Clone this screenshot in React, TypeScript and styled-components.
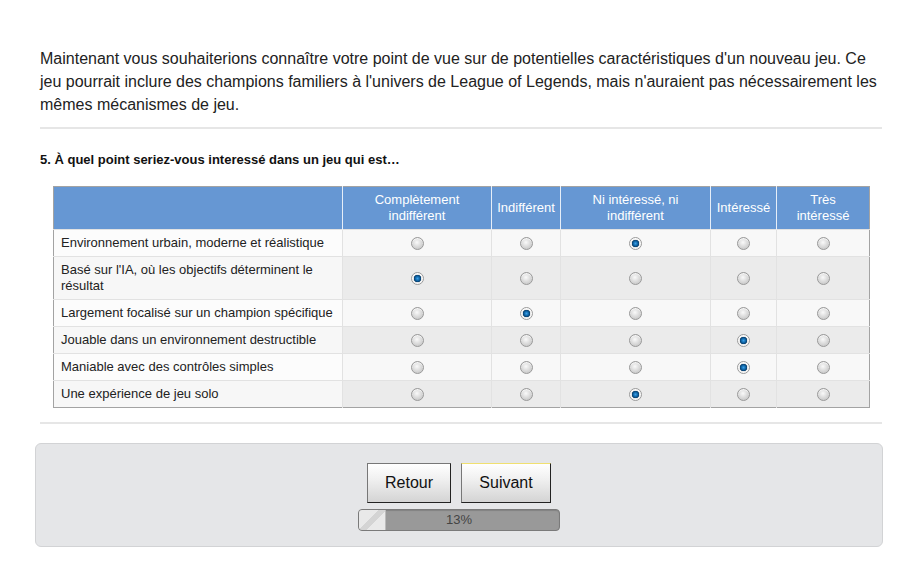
import React from 'react';
import styled, { createGlobalStyle } from 'styled-components';

const GlobalStyle = createGlobalStyle`
	html, body {
		margin: 0;
		padding: 0;
		background: #ffffff;
		font-family: 'Liberation Sans', Arial, sans-serif;
		color: #222;
	}
`;

const Page = styled.div`
	width: 842px;
	padding: 47px 0 0 40px;
`;

const Intro = styled.p`
	margin: 0;
	font-size: 16px;
	line-height: 23px;
	color: #222;
`;

const Divider = styled.hr<{ $gap: number }>`
	border: 0;
	height: 2px;
	background: #e6e6e6;
	margin: ${(p) => p.$gap}px 0 0;
`;

const Question = styled.h2`
	margin: 23px 0 0;
	font-size: 13px;
	line-height: 16px;
	font-weight: bold;
	color: #111;
`;

const Grid = styled.table`
	margin: 18px 0 0 13px;
	width: 816px;
	border-collapse: collapse;
	table-layout: fixed;
	border: 1px solid #a3a3a3;
	font-size: 13px;
	line-height: 16px;
`;

const HeadCell = styled.th`
	background: #6697d3;
	color: #fff;
	font-weight: normal;
	padding: 5px 2px;
	text-align: center;
	white-space: nowrap;
	border-left: 1px solid #e6eef8;
	&:first-child {
		border-left: 0;
	}
`;

const Row = styled.tr<{ $alt: boolean }>`
	background: ${(p) => (p.$alt ? '#ebebeb' : '#f8f8f8')};
`;

const LabelCell = styled.td`
	padding: 5px 8px 5px 7px;
	text-align: left;
	color: #222;
	border-top: 1px solid #e2e2e2;
	background: rgba(255, 255, 255, 0.6);
`;

const ChoiceCell = styled.td`
	padding: 5px 0;
	text-align: center;
	border-top: 1px solid #e2e2e2;
	border-left: 1px solid #e2e2e2;
	vertical-align: middle;
	line-height: 0;
`;

const Radio = styled.span<{ $on: boolean }>`
	display: inline-block;
	box-sizing: border-box;
	width: 13px;
	height: 13px;
	border-radius: 50%;
	border: 1px solid #9a9a9a;
	background: ${(p) =>
		p.$on
			? 'radial-gradient(circle at 50% 50%, #3aa0e8 0, #0b5d9c 2.5px, #083d6a 3.5px, #e6e6e6 4px, #ffffff 5.5px)'
			: 'radial-gradient(circle at 45% 40%, #fafafa 0, #e4e4e4 3px, #cfcfcf 6px)'};
	box-shadow: inset 0 1px 1px rgba(255, 255, 255, 0.8);
`;

const NavPanel = styled.div`
	margin: 19px 0 0 -5px;
	width: 848px;
	height: 104px;
	box-sizing: border-box;
	background: #e5e6e8;
	border: 1px solid #d2d3d5;
	border-radius: 6px;
	display: flex;
	flex-direction: column;
	align-items: center;
	padding-top: 19px;
	gap: 6px;
`;

const Buttons = styled.div`
	display: flex;
	gap: 10px;
`;

const NavButton = styled.button<{ $w: number; $focus?: boolean }>`
	width: ${(p) => p.$w}px;
	height: 40px;
	font-family: 'Liberation Sans', Arial, sans-serif;
	font-size: 16px;
	color: #111;
	background: linear-gradient(#ffffff, #f0f0f0 40%, #d4d4d4);
	border: 1px solid #555;
	border-top-color: ${(p) => (p.$focus ? '#f0e070' : '#777')};
	border-left-color: #777;
	border-right-color: #222;
	border-bottom-color: #222;
	padding: 0;
`;

const Progress = styled.div`
	position: relative;
	width: 202px;
	height: 22px;
	box-sizing: border-box;
	border: 1px solid #7a7a7a;
	border-radius: 4px;
	background: #999999;
	overflow: hidden;
	font-size: 13px;
	line-height: 20px;
	text-align: center;
	color: #444;
	box-shadow: inset 0 1px 1px rgba(0, 0, 0, 0.15);
`;

const Fill = styled.div`
	position: absolute;
	left: 0;
	top: 0;
	bottom: 0;
	background: linear-gradient(
		135deg,
		#e9e9e9 0,
		#e9e9e9 42%,
		#d4d4d4 42%,
		#d4d4d4 60%,
		#e9e9e9 60%
	);
	border-right: 1px solid #bbb;
`;

const ProgressText = styled.span`
	position: relative;
`;

const columns = [
	['Complètement', 'indifférent'],
	['Indifférent'],
	['Ni intéressé, ni', 'indifférent'],
	['Intéressé'],
	['Très', 'intéressé'],
];

const widths = [289, 149, 69, 150, 66, 93];

const items: [string, number][] = [
	['Environnement urbain, moderne et réalistique', 2],
	["Basé sur l'IA, où les objectifs déterminent le résultat", 0],
	['Largement focalisé sur un champion spécifique', 1],
	['Jouable dans un environnement destructible', 3],
	['Maniable avec des contrôles simples', 3],
	['Une expérience de jeu solo', 2],
];

export default function App(): JSX.Element {
	const percent = 13;
	return (
		<Page>
			<GlobalStyle />
			<Intro>
				Maintenant vous souhaiterions connaître votre point de vue sur de potentielles
				caractéristiques d'un nouveau jeu. Ce jeu pourrait inclure des champions familiers à
				l'univers de League of Legends, mais n'auraient pas nécessairement les mêmes
				mécanismes de jeu.
			</Intro>
			<Divider $gap={11} />
			<Question>5. À quel point seriez-vous interessé dans un jeu qui est…</Question>
			<Grid>
				<colgroup>
					{widths.map((w, i) => (
						<col key={i} style={{ width: w }} />
					))}
				</colgroup>
				<thead>
					<tr>
						<HeadCell />
						{columns.map((lines) => (
							<HeadCell key={lines.join(' ')}>
								{lines.map((l, i) => (
									<React.Fragment key={l}>
										{i > 0 && <br />}
										{l}
									</React.Fragment>
								))}
							</HeadCell>
						))}
					</tr>
				</thead>
				<tbody>
					{items.map(([label, picked], r) => (
						<Row key={label} $alt={r % 2 === 1}>
							<LabelCell>{label}</LabelCell>
							{columns.map((c, i) => (
								<ChoiceCell key={c.join(' ')}>
									<Radio $on={i === picked} />
								</ChoiceCell>
							))}
						</Row>
					))}
				</tbody>
			</Grid>
			<Divider $gap={14} />
			<NavPanel>
				<Buttons>
					<NavButton $w={84}>Retour</NavButton>
					<NavButton $w={90} $focus>
						Suivant
					</NavButton>
				</Buttons>
				<Progress>
					<Fill style={{ width: `${percent}%` }} />
					<ProgressText>{percent}%</ProgressText>
				</Progress>
			</NavPanel>
		</Page>
	);
}
